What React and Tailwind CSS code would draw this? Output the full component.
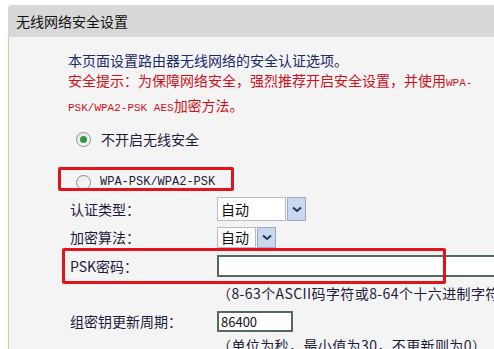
import React from 'react';

const cjk = { fontFamily: '"Noto Sans CJK SC", "Noto Sans", sans-serif' };
const mono = { fontFamily: '"Liberation Mono", "Noto Sans CJK SC", monospace' };

const Radio = ({ checked }) => (
  <span className="relative flex h-[15px] w-[15px] items-center justify-center rounded-full border border-[#8a8f99] bg-gradient-to-br from-[#e4e6ea] to-white">
    {checked && <span className="h-[7px] w-[7px] rounded-full bg-[#2f9a3c]" />}
  </span>
);

const Chevron = () => (
  <svg width="10" height="7" viewBox="0 0 10 7">
    <path d="M1 1.5 L5 5 L9 1.5" fill="none" stroke="#2b3558" strokeWidth="2" />
  </svg>
);

const Select = ({ boxW, h }) => (
  <div className="flex items-center gap-[1px]" style={{ height: h }}>
    <div
      className="flex h-full items-center border border-[#b8bcc4] bg-white pl-[3px] text-[14px] text-[#111]"
      style={{ width: boxW }}
    >
      自动
    </div>
    <div className="flex h-full w-[19px] items-center justify-center border border-[#9aa9c6] bg-[#c9d7ef]">
      <Chevron />
    </div>
  </div>
);

const Row = ({ label, children, className = '' }) => (
  <div className={`flex items-center pl-[2px] ${className}`}>
    <div className="w-[147px] shrink-0 text-[14px] text-[#1c1c3a]">{label}</div>
    {children}
  </div>
);

export default function App() {
  return (
    <div className="h-[349px] w-[494px] overflow-hidden bg-white pl-[8px] pt-[5px]" style={cjk}>
      <div className="flex h-[32px] items-center rounded-tl-[4px] bg-[#d8d8d8] pl-[8px] text-[14px] text-[#111]">
        无线网络安全设置
      </div>
      <div className="relative h-[320px] border-l border-[#e2c796] bg-[#f4f4f4] pl-[59px]">
        <div className="pt-[13px] text-[14px] leading-[20px]">
          <div className="text-[#1b2a6b]">本页面设置路由器无线网络的安全认证选项。</div>
          <div className="text-[#d0101a]">
            安全提示：为保障网络安全，强烈推荐开启安全设置，并使用<span className="text-[11px]" style={mono}>WPA-</span>
          </div>
          <div className="mt-[2px] text-[#d0101a]">
            <span className="text-[11px]" style={mono}>PSK/WPA2-PSK AES</span>加密方法。
          </div>
        </div>

        <div className="mt-[11px] flex h-[20px] items-center gap-[10px] pl-[8px] text-[14px] text-[#1c1c3a]">
          <Radio checked />
          <span>不开启无线安全</span>
        </div>

        <div className="relative mt-[23px] flex h-[20px] items-center gap-[9px] pl-[8px] text-[12px] text-[#1c1c3a]">
          <Radio />
          <span style={mono}>WPA-PSK/WPA2-PSK</span>
          <div className="absolute left-[-10px] top-[-5px] h-[24px] w-[176px] rounded-[2px] border-[3px] border-[#e3131b]" />
        </div>

        <Row label="认证类型：" className="mt-[5px]">
          <Select boxW={69} h={24} />
        </Row>

        <Row label="加密算法：" className="mt-[6px]">
          <Select boxW={39} h={21} />
        </Row>

        <div className="relative mt-[7px]">
          <Row label="PSK密码：">
            <div className="h-[22px] w-[300px] shrink-0 border-2 border-[#55695c] bg-white" />
          </Row>
          <div className="absolute left-[-6px] top-[-7px] h-[36px] w-[384px] rounded-[2px] border-[3px] border-[#e3131b]" />
        </div>

        <div className="mt-[6px] flex h-[20px] items-center whitespace-nowrap pl-[149px] text-[14px] tracking-[0.4px] text-[#1c1c3a]">
          （8-63个ASCII码字符或8-64个十六进制字符）
        </div>

        <Row label="组密钥更新周期：" className="mt-[8px]">
          <div className="flex h-[21px] w-[76px] items-center border-2 border-[#55695c] bg-white pl-[2px] text-[13px] text-[#111]">
            86400
          </div>
        </Row>

        <div className="mt-[3px] flex h-[20px] items-center whitespace-nowrap pl-[149px] text-[14px] tracking-[0.4px] text-[#1c1c3a]">
          （单位为秒，最小值为30，不更新则为0）
        </div>
      </div>
    </div>
  );
}
